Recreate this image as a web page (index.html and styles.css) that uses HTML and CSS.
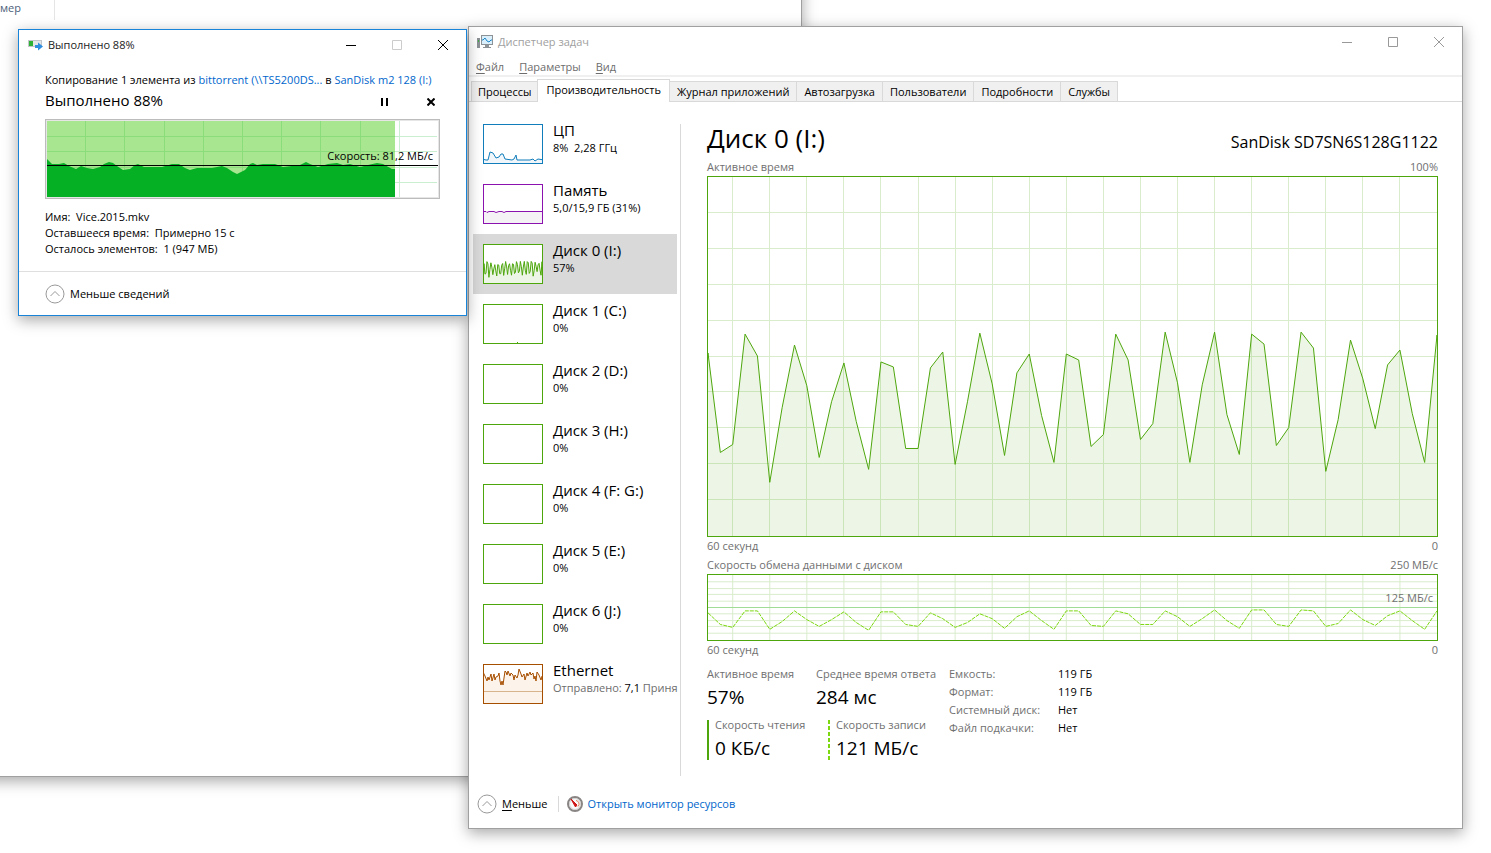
FILE: index.html
```html
<!DOCTYPE html>
<html lang="ru">
<head>
    <meta charset="UTF-8">
    <meta name="viewport" content="width=device-width, initial-scale=1.0">
    <title>Диспетчер задач</title>
    <link rel="stylesheet" href="styles.css">
</head>
<body>
    <div class="desktop">

        <!-- Explorer window in the background -->
        <div class="window explorer">
            <div class="column-header">мер</div>
        </div>

        <!-- Task manager -->
        <main class="window taskmgr">
            <header class="titlebar inactive">
                <svg class="app-icon" viewBox="0 0 16 16" aria-hidden="true">
                    <rect x="0" y="4" width="3" height="10" fill="#8d9296"/>
                    <rect x="1" y="6" width="1" height="2" fill="#3fae49"/>
                    <rect x="4" y="1" width="12" height="10" fill="#8d9296"/>
                    <rect x="5" y="2" width="10" height="8" fill="#d9effb"/>
                    <path d="M5 6h1l2-2 2 3 2 1 2-2h1" fill="none" stroke="#1b86c8"/>
                    <path d="M8 11h4v2h2v1H6v-1h2z" fill="#8d9296"/>
                </svg>
                <h1 class="caption">Диспетчер задач</h1>
                <div class="controls">
                    <button aria-label="Свернуть"><svg viewBox="0 0 10 10"><path d="M0 5.5h10"/></svg></button>
                    <button aria-label="Развернуть"><svg viewBox="0 0 10 10"><path d="M.5.5h9v9h-9z"/></svg></button>
                    <button aria-label="Закрыть"><svg viewBox="0 0 10 10"><path d="M0 0l10 10M10 0L0 10"/></svg></button>
                </div>
            </header>

            <nav class="menu">
                <button><u>Ф</u>айл</button>
                <button><u>П</u>араметры</button>
                <button><u>В</u>ид</button>
            </nav>

            <div class="tabs" role="tablist">
                <button role="tab">Процессы</button>
                <button role="tab" class="active" aria-selected="true">Производительность</button>
                <button role="tab">Журнал приложений</button>
                <button role="tab">Автозагрузка</button>
                <button role="tab">Пользователи</button>
                <button role="tab">Подробности</button>
                <button role="tab">Службы</button>
            </div>

            <div class="content">
                <aside class="sidebar">
                    <button class="device cpu">
                        <svg class="thumb" viewBox="1 1 58 38" preserveAspectRatio="none">
                            <path class="area" d="M-1 35l4 1h2l2-8 3 1 3 5 3-1 2-3h2l2 5 7 1 2-1 2-4 1 5h13l3-1 2 2 3-2 6 1v6H-1z"/>
                        </svg>
                        <span class="name">ЦП</span>
                        <span class="value">8%&nbsp; 2,28 ГГц</span>
                    </button>
                    <button class="device memory">
                        <svg class="thumb" viewBox="1 1 58 38" preserveAspectRatio="none">
                            <path class="area" d="M-1 27.5h4l1 1 2-1h5l2 1 3-1h3l2 1 2-1h38V41H-1z"/>
                        </svg>
                        <span class="name">Память</span>
                        <span class="value">5,0/15,9 ГБ (31%)</span>
                    </button>
                    <button class="device disk selected">
                        <svg class="thumb" viewBox="0 0 59 361" preserveAspectRatio="none">
                            <use href="#active-time"/>
                        </svg>
                        <span class="name">Диск 0 (I:)</span>
                        <span class="value">57%</span>
                    </button>
                    <button class="device disk">
                        <svg class="thumb" viewBox="1 1 58 38" preserveAspectRatio="none">
                            <path class="area" d="M34 38.5h1"/>
                        </svg>
                        <span class="name">Диск 1 (C:)</span>
                        <span class="value">0%</span>
                    </button>
                    <button class="device disk">
                        <svg class="thumb"></svg>
                        <span class="name">Диск 2 (D:)</span>
                        <span class="value">0%</span>
                    </button>
                    <button class="device disk">
                        <svg class="thumb"></svg>
                        <span class="name">Диск 3 (H:)</span>
                        <span class="value">0%</span>
                    </button>
                    <button class="device disk">
                        <svg class="thumb"></svg>
                        <span class="name">Диск 4 (F: G:)</span>
                        <span class="value">0%</span>
                    </button>
                    <button class="device disk">
                        <svg class="thumb"></svg>
                        <span class="name">Диск 5 (E:)</span>
                        <span class="value">0%</span>
                    </button>
                    <button class="device disk">
                        <svg class="thumb"></svg>
                        <span class="name">Диск 6 (J:)</span>
                        <span class="value">0%</span>
                    </button>
                    <button class="device ethernet">
                        <svg class="thumb" viewBox="1 1 58 38" preserveAspectRatio="none">
                            <path class="area" d="M0 8L2 12 4 17 5 13 6 16 8 10 9 17 11 10 12 16 13 13 15 12 16 9 17 17 18 21 19 17 20 21 22 7 23 8 24 11 25 7 27 12 28 9 30 11 31 16 32 11 34 14 35 11 36 5 38 10 39 13 41 10 42 16 44 9 45 12 47 8 48 11 50 9 51 15 52 12 53 17 54 8 56 11 58 16 59 12 62 14V41H-2z"/>
                            <path class="midline" d="M0 27.5h60"/>
                        </svg>
                        <span class="name">Ethernet</span>
                        <span class="value"><i>Отправлено:</i> 7,1 <i>Приня</i></span>
                    </button>
                </aside>

                <section class="details">
                    <div class="heading">
                        <h2>Диск 0 (I:)</h2>
                        <span class="model">SanDisk SD7SN6S128G1122</span>
                    </div>

                    <div class="axis"><span>Активное время</span><span>100%</span></div>
                    <svg class="graph graph-main" viewBox="0 0 59 361" preserveAspectRatio="none">
                        <path class="grid" d="M2 0V361M5 0V361M8 0V361M11 0V361M14 0V361M17 0V361M20 0V361M23 0V361M26 0V361M29 0V361M32 0V361M35 0V361M38 0V361M41 0V361M44 0V361M47 0V361M50 0V361M53 0V361M56 0V361
                            M0 36H59M0 72H59M0 108H59M0 144H59M0 180H59M0 216H59M0 252H59M0 288H59M0 324H59"/>
                        <path id="active-time" class="area" d="M-1 370L0 177 1 277 2 269 3 158 4 180 5 307 6 232 7 169 8 210 9 282 10 226 11 187 12 246 13 294 14 186 15 191 16 273 17 273 18 192 19 176 20 289 21 226 22 157 23 208 24 280 25 197 26 178 27 240 28 287 29 178 30 184 31 271 32 259 33 158 34 184 35 264 36 248 37 156 38 207 39 287 40 209 41 156 42 239 43 279 44 158 45 168 46 270 47 252 48 156 49 172 50 296 51 244 52 164 53 203 54 253 55 189 56 174 57 238 58 287 59 159 60 370z"/>
                    </svg>
                    <div class="axis below"><span>60 секунд</span><span>0</span></div>

                    <div class="axis"><span>Скорость обмена данными с диском</span><span>250 МБ/с</span></div>
                    <div class="transfer">
                        <svg class="graph graph-transfer" viewBox="0 0 59 67" preserveAspectRatio="none">
                            <path class="grid" d="M2 0V67M5 0V67M8 0V67M11 0V67M14 0V67M17 0V67M20 0V67M23 0V67M26 0V67M29 0V67M32 0V67M35 0V67M38 0V67M41 0V67M44 0V67M47 0V67M50 0V67M53 0V67M56 0V67
                                M0 7H59M0 14H59M0 20H59M0 27H59M0 40H59M0 47H59M0 53H59M0 60H59"/>
                            <path class="grid half" d="M0 33.5H59"/>
                            <path class="dashed" d="M0 39L1 51 2 54 3 37 4 37 5 56 6 48 7 37 8 46 9 53 10 46 11 38 12 49 13 57 14 38 15 38 16 51 17 53 18 39 19 45 20 54 21 49 22 40 23 45 24 55 25 43 26 37 27 47 28 56 29 37 30 37 31 52 32 53 33 37 34 40 35 51 36 51 37 37 38 43 39 53 40 45 41 36 42 47 43 55 44 36 45 36 46 51 47 53 48 36 49 37 50 53 51 50 52 36 53 46 54 52 55 42 56 37 57 47 58 56 59 37"/>
                        </svg>
                        <span class="half-label">125 МБ/с</span>
                    </div>
                    <div class="axis below"><span>60 секунд</span><span>0</span></div>

                    <div class="stats">
                        <div class="stats-live">
                            <div class="stat">
                                <span class="label">Активное время</span>
                                <span class="number">57%</span>
                            </div>
                            <div class="stat">
                                <span class="label">Среднее время ответа</span>
                                <span class="number">284 мс</span>
                            </div>
                            <div class="stat read">
                                <span class="label">Скорость чтения</span>
                                <span class="number">0 КБ/с</span>
                            </div>
                            <div class="stat write">
                                <span class="label">Скорость записи</span>
                                <span class="number">121 МБ/с</span>
                            </div>
                        </div>
                        <dl class="stats-info">
                            <dt>Емкость:</dt><dd>119 ГБ</dd>
                            <dt>Формат:</dt><dd>119 ГБ</dd>
                            <dt>Системный диск:</dt><dd>Нет</dd>
                            <dt>Файл подкачки:</dt><dd>Нет</dd>
                        </dl>
                    </div>
                </section>
            </div>

            <footer class="statusbar">
                <button class="collapse">
                    <svg class="chevron" viewBox="0 0 20 20"><circle cx="10" cy="10" r="9"/><path d="M5.500 12l4.500-4.500 4.500 4.500"/></svg>
                    <span><u>М</u>еньше</span>
                </button>
                <a class="monitor" href="#">
                    <svg viewBox="0 0 16 16" aria-hidden="true">
                        <circle cx="8" cy="8" r="7" fill="#fafafa" stroke="#8a8585" stroke-width="2"/>
                        <circle cx="8" cy="8" r="5.500" fill="none" stroke="#d4d0d0"/>
                        <path d="M9 4.500a3.500 3.500 0 0 1 2 6" fill="none" stroke="#e0805a"/>
                        <path d="M4 3l6 6-1.500 2z" fill="#d01818" stroke="#d01818"/>
                    </svg>
                    <span>Открыть монитор ресурсов</span>
                </a>
            </footer>
        </main>

        <!-- File copy dialog -->
        <section class="window copy">
            <header class="titlebar">
                <svg class="app-icon" viewBox="0 0 16 16" aria-hidden="true">
                    <rect x="1.500" y="3.500" width="13" height="6" fill="#e4e6e8" stroke="#c2c6ca"/>
                    <rect x="2" y="4" width="4" height="5" fill="#2fb135"/>
                    <path d="M8 8h3V5.500l5 4-5 4V11H8z" fill="#2f8ee0"/>
                </svg>
                <h1 class="caption">Выполнено 88%</h1>
                <div class="controls">
                    <button aria-label="Свернуть"><svg viewBox="0 0 10 10"><path d="M0 5.500h10"/></svg></button>
                    <button aria-label="Развернуть" disabled><svg viewBox="0 0 10 10"><path d="M.5.5h9v9h-9z"/></svg></button>
                    <button aria-label="Закрыть"><svg viewBox="0 0 10 10"><path d="M0 0l10 10M10 0L0 10"/></svg></button>
                </div>
            </header>
            <div class="copy-body">
                <p class="source">Копирование 1 элемента из <a href="#">bittorrent (\\TS5200DS...</a> в <a href="#">SanDisk m2 128 (I:)</a></p>
                <div class="progress-row">
                    <h2>Выполнено 88%</h2>
                    <button aria-label="Пауза"><svg viewBox="0 0 8 8"><path d="M0 0h2v8H0zM5 0h2v8H5z"/></svg></button>
                    <button aria-label="Отмена"><svg viewBox="0 0 8 8"><path class="cross" d="M.5.5l7 7M7.500.5l-7 7"/></svg></button>
                </div>
                <div class="speed">
                    <svg viewBox="0 0 391 76" preserveAspectRatio="none">
                        <path class="speed-grid" d="M0 15.500H390M0 30.500H390M0 46.500H390M0 61.500H390M352.500 0V76"/>
                        <rect width="348" height="76" fill="#a8e690"/>
                        <path class="done-grid" d="M0 15.500H348M0 30.500H348M0 46.500H348M38.500 0V76M77.500 0V76M117.500 0V76M156.500 0V76M195.500 0V76M234.500 0V76M273.500 0V76M313.500 0V76"/>
                        <path fill="#06b025" d="M0 38L2 40 5 43 12 43 17 42 22 45 29 48 34 45 40 47 46 48 53 46 57 43 62 41 66 42 70 45 76 49 83 48 88 44 91 43 97 46 115 46 125 43 132 43 138 47 143 49 150 47 165 47 175 45 180 47 186 51 190 53 198 49 203 43 206 42 210 44 216 43 228 43 236 46 253 44 259 41 263 43 271 46 281 43 290 42 296 44 303 43 313 46 321 44 330 42 336 43 345 48 348 48V76H0z"/>
                        <path class="speed-line" d="M0 44.500H391"/>
                    </svg>
                    <span class="speed-label">Скорость: 81,2 МБ/с</span>
                </div>
                <ul class="facts">
                    <li>Имя:&nbsp; Vice.2015.mkv</li>
                    <li>Оставшееся время:&nbsp; Примерно 15 с</li>
                    <li>Осталось элементов:&nbsp; 1 (947 МБ)</li>
                </ul>
            </div>
            <footer class="copy-footer">
                <button class="collapse">
                    <svg class="chevron" viewBox="0 0 20 20"><circle cx="10" cy="10" r="9"/><path d="M5.500 12l4.500-4.500 4.500 4.500"/></svg>
                    <span>Меньше сведений</span>
                </button>
            </footer>
        </section>

    </div>
</body>
</html>
```
FILE: styles.css
```css
* {
    box-sizing: border-box;
}

body {
    margin: 0;
    font-family: "Segoe UI", "Open Sans", "Noto Sans", sans-serif;
    font-size: 11px;
    line-height: 16px;
    color: #000;
    background: #fff;
}

h1, h2, p, ul, dl, dd {
    margin: 0;
    padding: 0;
    font-weight: normal;
}

button {
    font: inherit;
    color: inherit;
    background: none;
    border: none;
    padding: 0;
    margin: 0;
}

a {
    color: #0066cc;
    text-decoration: none;
}

svg {
    display: block;
    flex: none;
}

.desktop {
    position: relative;
    min-height: 100vh;
    overflow: hidden;
}

/* windows */

.window {
    position: absolute;
    display: flex;
    flex-direction: column;
    background: #fff;
    border: 1px solid #a0a0a0;
    box-shadow: 0 4px 14px rgba(0, 0, 0, 0.35);
}

.titlebar {
    display: flex;
    align-items: center;
    height: 30px;
    padding-left: 8px;
}

.app-icon {
    width: 16px;
    height: 16px;
    margin-right: 5px;
}

.caption {
    flex: 1;
    font-size: 11px;
    color: #222;
}

.inactive .caption {
    color: #a0a0a0;
}

.controls {
    display: flex;
}

.controls button {
    display: flex;
    align-items: center;
    justify-content: center;
    width: 46px;
    height: 28px;
}

.controls svg {
    width: 10px;
    height: 10px;
    fill: none;
    stroke: #000;
}

.inactive .controls svg {
    stroke: #999;
}

.controls button:disabled svg {
    stroke: #ccc;
}

.collapse {
    display: flex;
    align-items: center;
}

.chevron {
    width: 20px;
    height: 20px;
    margin-right: 5px;
    fill: none;
    stroke: #999;
}

/* explorer */

.explorer {
    left: -20px;
    top: -20px;
    width: 822px;
    height: 797px;
}

.column-header {
    width: 74px;
    height: 39px;
    padding: 19px;
    color: #4c607a;
    border-right: 1px solid #e5e5e5;
}

/* task manager */

.taskmgr {
    left: 468px;
    right: 28px;
    top: 26px;
    bottom: 24px;
}

.menu {
    display: flex;
    gap: 15px;
    height: 20px;
    padding: 0 7px;
    line-height: 20px;
    color: #6d6d6d;
    border-bottom: 2px solid #f0f0f0;
}

.menu u, .collapse u {
    text-underline-offset: 2px;
}

.tabs {
    display: flex;
    align-items: flex-end;
    height: 25px;
    padding-left: 2px;
    border-bottom: 1px solid #d9d9d9;
}

.tabs button {
    height: 20px;
    padding: 0 6px;
    background: #f0f0f0;
    border: 1px solid #d9d9d9;
    border-bottom: none;
    margin-right: -1px;
}

.tabs .active {
    position: relative;
    height: 23px;
    padding: 0 8px 3px;
    background: #fff;
    margin-bottom: -1px;
}

.tabs button:nth-child(n + 3) {
    padding: 0 7px;
}

.content {
    flex: 1;
    display: flex;
    min-height: 0;
    padding: 12px 24px 0 4px;
}

.sidebar {
    width: 207px;
    overflow: hidden;
}

.device {
    display: grid;
    grid-template: 19px 16px / 60px 1fr;
    column-gap: 10px;
    width: 204px;
    height: 60px;
    padding: 7px 0 0 10px;
    text-align: left;
    white-space: nowrap;
}

.device.selected {
    background: #d9d9d9;
}

.thumb {
    grid-row: 1 / 3;
    width: 60px;
    height: 40px;
    margin-top: 3px;
    background: #fff;
    border: 1px solid;
}

.device .name {
    font-size: 15px;
    line-height: 18px;
}

.device i {
    font-style: normal;
    color: #6d6d6d;
}

.area {
    stroke-width: 1px;
    vector-effect: non-scaling-stroke;
}

.cpu .thumb {
    color: #117dbb;
    stroke: #117dbb;
    fill: #f1f6fa;
}

.memory .thumb {
    color: #8b12ae;
    stroke: #8b12ae;
    fill: #f4f2f4;
}

.disk .thumb {
    color: #4da60c;
    stroke: #4da60c;
    fill: #eff7e9;
}

.ethernet .thumb {
    color: #a74f01;
    stroke: #a74f01;
    fill: #fcf3eb;
}

.ethernet .midline {
    stroke: #d8b48c;
}

.details {
    flex: 1;
    display: flex;
    flex-direction: column;
    min-width: 0;
    margin-top: 10px;
    padding-left: 26px;
    border-left: 1px solid #d9d9d9;
}

.heading {
    display: flex;
    justify-content: space-between;
    height: 34px;
}

.heading h2 {
    font-size: 26px;
    line-height: 28px;
}

.model {
    font-size: 16px;
    line-height: 36px;
}

.axis {
    display: flex;
    justify-content: space-between;
    height: 18px;
    line-height: 18px;
    color: #707070;
}

.axis.below {
    height: 19px;
}

.graph {
    width: 100%;
    border: 1px solid #4da60c;
}

.graph .grid {
    fill: none;
    stroke: #d9eccc;
    shape-rendering: crispEdges;
    vector-effect: non-scaling-stroke;
}

.graph .half {
    stroke: #a0dc96;
}

.graph .area {
    fill: rgba(77, 166, 12, 0.1);
    stroke: #4da60c;
}

.graph-main {
    flex: 1;
    min-height: 0;
}

.graph-transfer {
    height: 67px;
}

.graph .dashed {
    fill: none;
    stroke: #7cd811;
    stroke-dasharray: 4 1;
    vector-effect: non-scaling-stroke;
}

.transfer {
    position: relative;
}

.half-label {
    position: absolute;
    right: 5px;
    top: 16px;
    color: #707070;
}

.stats {
    display: flex;
    height: 116px;
    padding-top: 6px;
}

.stats-live {
    display: flex;
    flex-wrap: wrap;
    align-content: flex-start;
    width: 242px;
}

.stat {
    width: 109px;
    height: 54px;
}

.stat .label {
    display: block;
    color: #707070;
    white-space: nowrap;
}

.stat .number {
    display: block;
    font-size: 19px;
    line-height: 30px;
}

.stat.read, .stat.write {
    width: 121px;
    height: 40px;
    padding-left: 6px;
    border-left: 2px solid #4da60c;
}

.stat.write {
    padding-left: 8px;
    border-left: none;
    background: repeating-linear-gradient(#7cd811 0 4px, transparent 4px 6px) left / 2px 100% no-repeat;
}

.read .label, .write .label {
    line-height: 10px;
}

.read .number, .write .number {
    line-height: 36px;
}

.stats-info {
    display: grid;
    grid-template-columns: 109px auto;
    grid-auto-rows: 18px;
}

.stats-info dt {
    color: #707070;
}

.statusbar {
    display: flex;
    align-items: center;
    height: 52px;
    padding: 3px 0 0 8px;
}

.monitor {
    display: flex;
    align-items: center;
    gap: 5px;
    margin-left: 10px;
    padding-left: 8px;
    border-left: 1px solid #d9d9d9;
}

.monitor svg {
    width: 16px;
    height: 16px;
}

/* copy dialog */

.copy {
    left: 18px;
    top: 29px;
    width: 449px;
    border-color: #1883d7;
}

.copy .controls {
    margin-top: -1px;
}

.copy-body {
    padding: 12px 26px 14px;
}

.source {
    white-space: nowrap;
}

.progress-row {
    display: flex;
    height: 31px;
    padding: 2px 1px 0 0;
}

.progress-row h2 {
    flex: 1;
    font-size: 15px;
    line-height: 20px;
}

.progress-row button {
    height: 24px;
    padding: 0 4px;
    margin-left: 30px;
}

.progress-row svg {
    width: 8px;
    height: 8px;
}

.progress-row .cross {
    stroke: #000;
    stroke-width: 2px;
}

.speed {
    position: relative;
    height: 80px;
    padding: 1px;
    background: #fff;
    border: 1px solid #bcbcbc;
    box-shadow: inset 0 0 0 1px #e6e6e6;
}

.speed svg {
    width: 100%;
    height: 76px;
}

.speed-grid, .done-grid {
    fill: none;
    stroke: #caeed0;
}

.done-grid {
    stroke: #8bdc7b;
}

.speed-line {
    stroke: #000;
}

.speed-label {
    position: absolute;
    right: 6px;
    top: 28px;
}

.facts {
    list-style: none;
    margin-top: 10px;
}

.copy-footer {
    height: 44px;
    padding: 12px 26px;
    border-top: 1px solid #dfdfdf;
}
```
